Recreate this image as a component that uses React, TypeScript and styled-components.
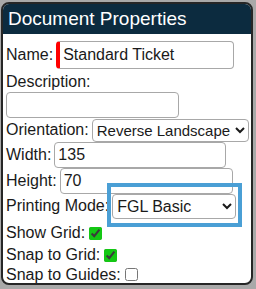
import React from "react";
import styled, { createGlobalStyle } from "styled-components";

const Global = createGlobalStyle`
  html, body {
    margin: 0;
    padding: 0;
    background: #a9a9a9;
  }
  body {
    width: 256px;
    height: 289px;
    overflow: hidden;
    font-family: "Liberation Sans", Arial, sans-serif;
  }
`;

export default function App() {
  return (
    <>
      <Global />
      <Panel>
        <Header>Document Properties</Header>
        <Body>
          <Row $h={32}>
            <Label>Name:</Label>
            <Input $w={178} $h={28} $flag defaultValue="Standard Ticket" />
          </Row>
          <Row $h={21}>
            <Label>Description:</Label>
          </Row>
          <Row $h={26}>
            <Input $w={173} $h={26} defaultValue="" />
          </Row>
          <Row $h={24}>
            <Label>Orientation:</Label>
            <Select $w={157} $h={23} $fs={15} defaultValue="rl">
              <option value="p">Portrait</option>
              <option value="l">Landscape</option>
              <option value="rl">Reverse Landscape</option>
            </Select>
          </Row>
          <Row $h={26}>
            <Label>Width:</Label>
            <Input $w={172} $h={26} defaultValue="135" />
          </Row>
          <Row $h={25}>
            <Label>Height:</Label>
            <Input $w={173} $h={26} defaultValue="70" />
          </Row>
          <Row $h={26}>
            <Label>Printing Mode:</Label>
            <Highlight>
              <Select $w={124} $h={25} $fs={16} defaultValue="fgl">
                <option value="fgl">FGL Basic</option>
                <option value="zpl">ZPL</option>
              </Select>
            </Highlight>
          </Row>
          <Row $h={22} $top={3}>
            <Label>Show Grid:</Label>
            <Check type="checkbox" defaultChecked />
          </Row>
          <Row $h={22}>
            <Label>Snap to Grid:</Label>
            <Check type="checkbox" defaultChecked />
          </Row>
          <Row $h={17}>
            <Label>Snap to Guides:</Label>
            <Check type="checkbox" />
          </Row>
        </Body>
      </Panel>
    </>
  );
}

const Panel = styled.div`
  box-sizing: border-box;
  margin: 2px 3px 0 1px;
  height: 283px;
  border: 2px solid #262626;
  border-radius: 8px;
  background: #fff;
  overflow: hidden;
`;

const Header = styled.div`
  height: 30px;
  background: #0c2b3f;
  color: #fff;
  font-size: 19px;
  line-height: 30px;
  padding-left: 5px;
  white-space: nowrap;
`;

const Body = styled.div`
  padding: 5px 0 0 3px;
  color: #1a1a1a;
  font-size: 16px;
`;

const Row = styled.div<{ $h: number; $top?: number }>`
  display: flex;
  align-items: center;
  gap: 3px;
  height: ${(p) => p.$h}px;
  margin-top: ${(p) => p.$top ?? 0}px;
`;

const Label = styled.span`
  white-space: nowrap;
`;

const Input = styled.input<{ $w: number; $h: number; $flag?: boolean }>`
  box-sizing: border-box;
  width: ${(p) => p.$w}px;
  height: ${(p) => p.$h}px;
  border: 1px solid #a8a8a8;
  border-left: ${(p) => (p.$flag ? "4px solid #ff0000" : "1px solid #a8a8a8")};
  border-radius: 4px;
  padding: 0 3px;
  font: inherit;
  color: #1a1a1a;
  background: #fff;
`;

const Select = styled.select<{ $w: number; $h: number; $fs: number }>`
  box-sizing: border-box;
  width: ${(p) => p.$w}px;
  height: ${(p) => p.$h}px;
  border: 1px solid #a8a8a8;
  border-radius: 4px;
  padding: 0;
  font-family: inherit;
  font-size: ${(p) => p.$fs}px;
  color: #1a1a1a;
  background: #fff;
`;

const Highlight = styled.span`
  position: relative;
  display: inline-flex;

  &::after {
    content: "";
    position: absolute;
    top: -11px;
    left: -5px;
    right: -6px;
    bottom: -8px;
    border: 4px solid #4a9fd5;
    pointer-events: none;
  }
`;

const Check = styled.input`
  width: 13px;
  height: 13px;
  margin: 0 0 0 1px;
  accent-color: #14c814;
`;
